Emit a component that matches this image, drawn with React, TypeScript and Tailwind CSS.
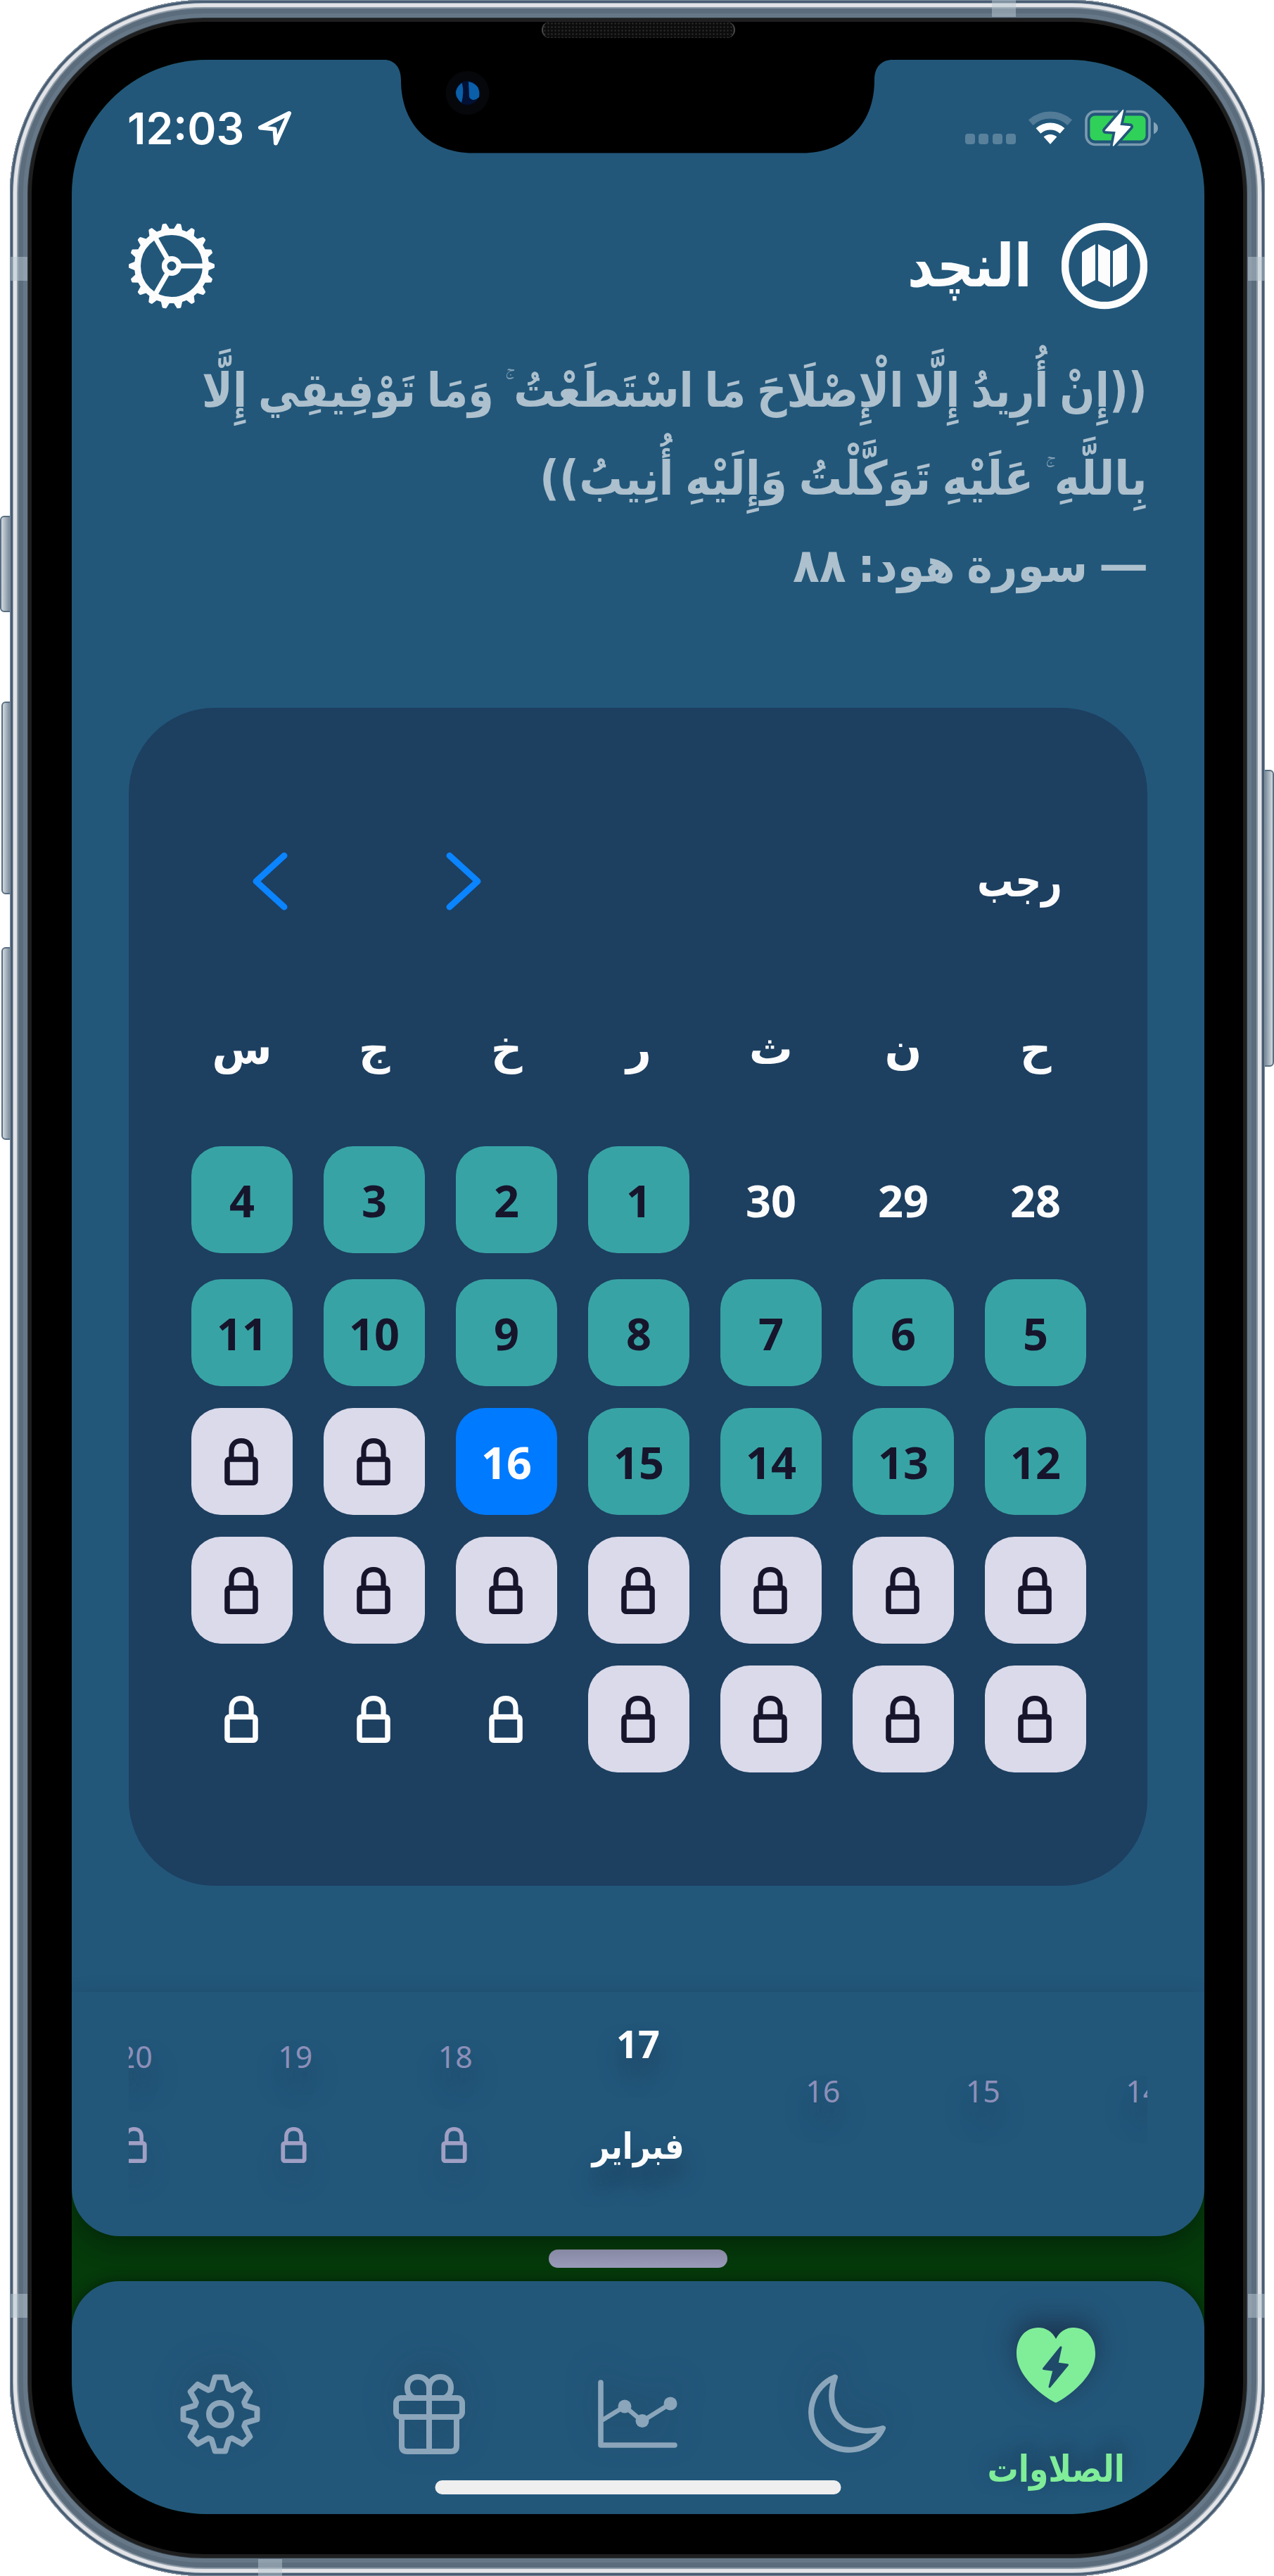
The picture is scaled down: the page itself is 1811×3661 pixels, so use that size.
import { useLayoutEffect, useRef, useState, type ReactNode } from "react";

/* Keeps a single line of text at an exact width by condensing or widening its glyphs. */
function FitText({
  width,
  className = "",
  origin = "right",
  children,
}: {
  width: number;
  className?: string;
  origin?: "right" | "center";
  children: ReactNode;
}) {
  const ref = useRef<HTMLSpanElement>(null);
  const [scale, setScale] = useState(1);
  useLayoutEffect(() => {
    if (ref.current) setScale(width / ref.current.offsetWidth);
  }, [width]);
  return (
    <span dir="rtl" className={"flex shrink-0 " + (origin === "center" ? "justify-center " : "justify-start ") + className} style={{ width }}>
      <span
        ref={ref}
        className="inline-block shrink-0 whitespace-nowrap"
        style={{ transform: `scaleX(${scale})`, transformOrigin: origin }}
      >
        {children}
      </span>
    </span>
  );
}

/* Small raised pause sign between two phrases of a verse. */
function PauseMark() {
  return <span className="relative -top-[14px] text-[44px] font-normal leading-none opacity-70">{"\u00a0\u00a0\u06da"}</span>;
}

const polar = (cx: number, cy: number, r: number, deg: number) => {
  const a = (deg * Math.PI) / 180;
  return `${(cx + r * Math.cos(a)).toFixed(2)} ${(cy + r * Math.sin(a)).toFixed(2)}`;
};

function CogWheel() {
  const teeth = Array.from({ length: 18 }, (_, i) => i * 20);
  return (
    <svg width="122" height="124" viewBox="0 0 122 124" fill="none" stroke="#fcfcfd">
      <circle cx="61" cy="62" r="48.5" strokeWidth="9" />
      {teeth.map((t) => (
        <path
          key={t}
          fill="#fcfcfd"
          strokeWidth="3"
          strokeLinejoin="round"
          d={`M${polar(61, 62, 50, t - 6.5)} L${polar(61, 62, 59.5, t - 1.6)} L${polar(61, 62, 59.5, t + 1.6)} L${polar(61, 62, 50, t + 6.5)} Z`}
        />
      ))}
      <circle cx="61" cy="62" r="10.3" strokeWidth="7.6" />
      {[0, 120, 240].map((t) => (
        <path key={t} strokeWidth="7" d={`M${polar(61, 62, 13, t)} L${polar(61, 62, 47, t)}`} />
      ))}
    </svg>
  );
}

function MapBadge() {
  return (
    <svg width="122" height="124" viewBox="0 0 122 124" fill="#fcfcfd">
      <circle cx="61" cy="62" r="56" fill="none" stroke="#fcfcfd" strokeWidth="10.5" />
      <path d="M29 44 Q29 42 31 41 L48 31 V82 L31 91 Q29 92 29 90 Z" />
      <path d="M52 31 L69 40 V92 L52 83 Z" />
      <path d="M73 41 L91 31 Q93 30 93 32 V79 Q93 81 91 82 L73 92 Z" />
    </svg>
  );
}

function LocationArrow() {
  return (
    <svg width="49" height="51" viewBox="0 0 49 51" fill="none" stroke="white" strokeWidth="6" strokeLinejoin="round">
      <path d="M45 4 L4 24.500 L24.5 26.5 L26 46.5 Z" />
    </svg>
  );
}

function Wifi() {
  const arc = (r: number) => `M${polar(31, 47, r, -132)} A${r} ${r} 0 0 1 ${polar(31, 47, r, -48)}`;
  return (
    <svg width="62" height="48" viewBox="0 0 62 48" fill="none" stroke="white">
      <path d={arc(41.5)} strokeWidth="10" opacity="0.22" />
      <path d={arc(25.5)} strokeWidth="10" />
      <path d={`M31 47 L${polar(31, 47, 14, -132)} A14 14 0 0 1 ${polar(31, 47, 14, -48)} Z`} fill="white" stroke="none" />
    </svg>
  );
}

function Battery() {
  return (
    <svg width="105" height="52" viewBox="0 0 105 52" className="overflow-visible">
      <rect x="2" y="2.5" width="90" height="47" rx="13" fill="none" stroke="white" strokeOpacity="0.4" strokeWidth="3.6" />
      <path d="M98 17.5 Q104 20 104 26 Q104 32 98 34.5 Z" fill="white" fillOpacity="0.45" />
      <rect x="7.5" y="8.5" width="79" height="35" rx="7" fill="#30d158" />
      <path
        d="M54.5 0.5 L29.5 29.5 L44.5 30.5 L40.5 51 L64.5 24 L49.5 22.5 Z"
        fill="white"
        stroke="#22577a"
        strokeWidth="9"
        strokeLinejoin="round"
        paintOrder="stroke"
      />
      <path d="M54.5 0.5 L29.5 29.5 L44.5 30.5 L40.5 51 L64.5 24 L49.5 22.5 Z" fill="white" stroke="white" strokeWidth="1.5" strokeLinejoin="round" />
    </svg>
  );
}

function Lock({ className = "" }: { className?: string }) {
  return (
    <svg viewBox="0 0 48 67" fill="none" stroke="currentColor" className={className}>
      <rect x="4" y="30" width="40" height="33.2" rx="3" strokeWidth="7.6" />
      <path d="M10 29 V18 C10 9 15 3.6 24 3.6 C33 3.6 38 9 38 18 V29" strokeWidth="7.2" />
    </svg>
  );
}

function Chevron({ dir }: { dir: "left" | "right" }) {
  return (
    <svg width="50" height="83" viewBox="0 0 50 83" fill="none" stroke="#0a84ff" strokeWidth="9" strokeLinecap="round" strokeLinejoin="round">
      <path d={dir === "left" ? "M45 5 L5 41.5 L45 78" : "M5 5 L45 41.5 L5 78"} />
    </svg>
  );
}

function SettingsIcon() {
  const pts: string[] = [];
  for (let i = 0; i < 8; i++) {
    const a = i * 45 - 90;
    pts.push(polar(56, 57, 38, a - 19), polar(56, 57, 42, a - 15), polar(56, 57, 53, a - 8), polar(56, 57, 53, a + 8), polar(56, 57, 42, a + 15), polar(56, 57, 38, a + 19));
  }
  return (
    <svg width="112" height="114" viewBox="0 0 112 114" fill="none" stroke="currentColor" strokeWidth="8" strokeLinejoin="round" className="overflow-visible">
      <path d={`M${pts.join(" L")} Z`} />
      <circle cx="56" cy="57" r="16" />
    </svg>
  );
}

function GiftIcon() {
  return (
    <svg width="102" height="114" viewBox="0 0 102 114" fill="none" stroke="currentColor" strokeWidth="8" strokeLinejoin="round">
      <rect x="4" y="34" width="94" height="27" rx="7" />
      <path d="M12 62 V102 Q12 110 20 110 H82 Q90 110 90 102 V62" />
      <path d="M51 19 V109" />
      <path d="M51 33 V20 C51 10 44 4 35 4 C26 4 20 10 20 19 C20 27 24 32 30 34" />
      <path d="M51 33 V20 C51 10 58 4 67 4 C76 4 82 10 82 19 C82 27 78 32 72 34" />
    </svg>
  );
}

function ChartIcon() {
  return (
    <svg width="114" height="98" viewBox="0 0 114 98" fill="none" stroke="currentColor" strokeWidth="7.6" strokeLinecap="round" strokeLinejoin="round">
      <path d="M4 4 V93 H109" />
      <path d="M7 57 L38 38 L63 59 L103 34" strokeWidth="6.5" />
      <circle cx="38" cy="38" r="9.5" fill="currentColor" stroke="none" />
      <circle cx="63" cy="58.5" r="9.5" fill="currentColor" stroke="none" />
      <circle cx="103" cy="34" r="9.5" fill="currentColor" stroke="none" />
    </svg>
  );
}

function MoonIcon() {
  return (
    <svg width="112" height="114" viewBox="0 0 112 114" fill="none" stroke="currentColor" strokeWidth="8" strokeLinecap="round" strokeLinejoin="round">
      <path d="M39 4.5 A53.5 53.5 0 1 0 107 77 C88 83 68 82 53 71 C37 59 28 36 39 4.5 Z" />
    </svg>
  );
}

function HeartIcon() {
  return (
    <svg width="112" height="107" viewBox="0 0 112 107">
      <path
        d="M56 106.500 C52 106.500 0 75 0 37 C0 14 13 0 31 0 C42 0 51 6 56 16 C61 6 70 0 81 0 C99 0 112 14 112 37 C112 75 60 106.500 56 106.500 Z"
        fill="#80ed99"
      />
      <path
        d="M63 28 L38.500 58.500 L53 60.500 L47 84 L72.500 53 L58 51 Z"
        fill="#1f4a69"
        stroke="#1f4a69"
        strokeWidth="3"
        strokeLinejoin="round"
      />
    </svg>
  );
}

const weekdays = ["ح", "ن", "ث", "ر", "خ", "ج", "س"];

type Cell = { label?: string; tone: "plain" | "done" | "today" | "locked" };
const c = (label: string, tone: Cell["tone"]): Cell => ({ label, tone });
const lock: Cell = { tone: "locked" };
const bare: Cell = { tone: "plain" };

const weeks: Cell[][] = [
  [c("28", "plain"), c("29", "plain"), c("30", "plain"), c("1", "done"), c("2", "done"), c("3", "done"), c("4", "done")],
  ["5", "6", "7", "8", "9", "10", "11"].map((d) => c(d, "done")),
  [c("12", "done"), c("13", "done"), c("14", "done"), c("15", "done"), c("16", "today"), lock, lock],
  [lock, lock, lock, lock, lock, lock, lock],
  [lock, lock, lock, lock, bare, bare, bare],
];

const tones = {
  plain: "text-[#fcfcfd]",
  done: "bg-[#38a3a5] text-[#16152c]",
  today: "bg-[#007aff] text-[#fcfcfd]",
  locked: "bg-[#dadaea] text-[#16152c]",
};

function StatusBar() {
  return (
    <div className="flex h-[194px] items-center pl-[79px] pr-[65px]">
      <span className="font-['Inter'] text-[62.500px] font-semibold leading-none text-white">12:03</span>
      <span className="ml-[19px]">
        <LocationArrow />
      </span>
      <div className="ml-auto flex items-center">
        <div className="mt-[30px] flex gap-[5.500px]">
          {[0, 1, 2, 3].map((i) => (
            <span key={i} className="h-[15px] w-[14px] rounded-[4px] bg-white/25" />
          ))}
        </div>
        <span className="ml-[18px]">
          <Wifi />
        </span>
        <span className="ml-[18px]">
          <Battery />
        </span>
      </div>
    </div>
  );
}

function Calendar() {
  return (
    <section className="mx-[81px] mt-[137px] h-[1674px] rounded-[122px] bg-[#1d3f60] px-[87px] pt-[185px] font-bold text-[#fcfcfd]">
      <div dir="rtl" className="flex h-[122px] items-center justify-between pl-[89px] pr-[34px]">
        <FitText width={121} className="text-[64px] leading-[100px]">
          رجب
        </FitText>
        <div dir="ltr" className="flex gap-[225px]">
          <Chevron dir="left" />
          <Chevron dir="right" />
        </div>
      </div>
      <div dir="rtl" className="mt-[128px] grid grid-cols-[repeat(7,144px)] gap-x-[44px] text-center text-[62px] leading-[100px]">
        {weekdays.map((d) => (
          <span key={d}>{d}</span>
        ))}
      </div>
      <div dir="rtl" className="mt-[88px] flex flex-col gap-[31px]">
        {weeks.map((w, r) => (
          <div key={r} className={"grid grid-cols-[repeat(7,144px)] gap-x-[44px] " + (r === 0 ? "mb-[6px]" : "")}>
            {w.map((cell, i) => (
              <div
                key={i}
                className={
                  "flex h-[152px] items-center justify-center rounded-[42px] font-['Noto_Sans'] text-[63px] font-bold leading-none " + tones[cell.tone]
                }
              >
                {cell.label ?? <Lock className="mr-[2px] h-[67px] w-[48px]" />}
              </div>
            ))}
          </div>
        ))}
      </div>
    </section>
  );
}

function StripDay({ day, locked, offset }: { day: string; locked?: boolean; offset: string }) {
  return (
    <div className={"flex w-[227.500px] shrink-0 flex-col items-center text-[#8d8fb8] " + offset}>
      <span className="font-['Noto_Sans'] text-[43px] leading-[60px] [text-shadow:0_26px_34px_rgba(30,50,75,0.6)]">{day}</span>
      {locked && <Lock className="mr-[4px] mt-[70px] h-[51px] w-[37px] text-[#a09fc4] drop-shadow-[0_24px_16px_rgba(30,55,82,0.35)]" />}
    </div>
  );
}

function DayStrip() {
  return (
    <div className="relative h-[347px] rounded-b-[68px] bg-[#22577a] px-[81px] shadow-[0_14px_36px_rgba(0,0,0,0.3)]">
      <div className="flex h-full justify-center overflow-hidden">
        <StripDay day="20" locked offset="pt-[62px]" />
        <StripDay day="19" locked offset="pt-[62px]" />
        <StripDay day="18" locked offset="pt-[62px]" />
        <div className="flex w-[292px] shrink-0 flex-col items-center pt-[43px] font-bold text-[#fcfcfd]">
          <span className="font-['Noto_Sans'] text-[54px] leading-[60px] [text-shadow:0_24px_32px_rgba(30,50,75,0.7)]">17</span>
          <FitText width={131} origin="center" className="mt-[87px] text-[51px] leading-[60px] [text-shadow:0_24px_32px_rgba(30,50,75,0.7)]">
            فبراير
          </FitText>
        </div>
        <div className="ml-[3px] flex shrink-0">
          <StripDay day="16" offset="pt-[111px]" />
          <StripDay day="15" offset="pt-[111px]" />
          <StripDay day="14" offset="-mr-[3px] pt-[111px]" />
        </div>
      </div>
    </div>
  );
}

function TabBar() {
  const shadow = "drop-shadow-[0_-18px_22px_rgba(30,50,75,0.4)]";
  return (
    <nav className="relative flex h-[331px] justify-center rounded-t-[68px] bg-[#22577a] text-[#8ba5ba] shadow-[0_0_20px_rgba(0,0,0,0.4)]">
      {[<SettingsIcon />, <GiftIcon />, <ChartIcon />, <MoonIcon />].map((icon, i) => (
        <div key={i} className="mt-[132px] flex h-[114px] w-[297px] items-center justify-center">
          <span className={shadow}>{icon}</span>
        </div>
      ))}
      <div className="flex w-[297px] flex-col items-center pt-[66px] font-bold text-[#80ed99]">
        <span className="drop-shadow-[0_-12px_20px_rgba(25,35,60,0.7)]">
          <HeartIcon />
        </span>
        <FitText width={195} origin="center" className="mt-[64px] text-[52px] leading-[60px] [text-shadow:0_-12px_30px_rgba(30,50,75,0.7)]">
          الصلاوات
        </FitText>
      </div>
      <div className="absolute bottom-[28px] left-1/2 h-[20px] w-[577px] -translate-x-1/2 rounded-full bg-[#efefef]" />
    </nav>
  );
}

function Bands() {
  return (
    <>
      <div className="absolute left-[15px] top-[365px] h-[34px] w-[24px] bg-[#b9c8d2]/50" />
      <div className="absolute left-[15px] top-[3260px] h-[34px] w-[24px] bg-[#b9c8d2]/50" />
      <div className="absolute left-[1774px] top-[365px] h-[34px] w-[24px] bg-[#b9c8d2]/50" />
      <div className="absolute left-[1774px] top-[3260px] h-[34px] w-[24px] bg-[#b9c8d2]/50" />
      <div className="absolute left-[1410px] top-0 h-[24px] w-[34px] bg-[#b9c8d2]/50" />
      <div className="absolute left-[367px] top-[3637px] h-[24px] w-[34px] bg-[#b9c8d2]/50" />
    </>
  );
}

function SideButtons() {
  return (
    <>
      <div className="absolute left-0 top-[733px] h-[137px] w-[18px] rounded-l-[6px] border-[2px] border-[#586e82] bg-linear-to-r from-[#d3dae0] to-[#6a7c8c]" />
      <div className="absolute left-[2px] top-[997px] h-[274px] w-[16px] rounded-l-[6px] border-[2px] border-[#586e82] bg-linear-to-r from-[#d3dae0] to-[#6a7c8c]" />
      <div className="absolute left-[2px] top-[1346px] h-[274px] w-[16px] rounded-l-[6px] border-[2px] border-[#586e82] bg-linear-to-r from-[#d3dae0] to-[#6a7c8c]" />
      <div className="absolute left-[1794px] top-[1094px] h-[422px] w-[17px] rounded-r-[6px] border-[2px] border-[#586e82] bg-linear-to-l from-[#d3dae0] to-[#6a7c8c]" />
    </>
  );
}

function Notch() {
  return (
    <>
      <svg width="723" height="134" viewBox="546 84 723 134" className="absolute left-[546px] top-[84px]">
        <path
          d="M546 84 V85 C560 85 570 95 570 114 C570 180 615 217.500 672 217.500 H1141 C1198 217.500 1243 180 1243 114 C1243 95 1253 85 1269 85 V84 Z"
          fill="black"
        />
        <circle cx="664.500" cy="132" r="31" fill="#06070b" />
        <circle cx="664.500" cy="132" r="17" fill="#021033" />
        <path d="M656 118 Q640 132 656 146 Q660 132 657 119 Z" fill="#0a5fa8" />
        <path d="M666 116 Q684 120 681 138 Q672 146 667 138 Z" fill="#0a5fa8" />
      </svg>
      <div className="absolute left-[770px] top-[31px] h-[23px] w-[275px] rounded-full border-x-2 border-[#4a4a4a] bg-[#0c0c0c] bg-[radial-gradient(#262626_1px,transparent_1.500px)] bg-[size:5px_5px]" />
    </>
  );
}

export default function App() {
  return (
    <main className="relative h-[3661px] w-[1811px] overflow-hidden bg-white font-['DejaVu_Sans',sans-serif]">
      <SideButtons />
      <div className="relative ml-[14px] h-[3661px] w-[1784px] rounded-[276px] bg-black px-[88px] pt-[85px] shadow-[inset_0_0_0_1px_#7f90a0,inset_0_0_0_4px_#485c72,inset_0_0_0_5px_#9aa7b2,inset_0_0_0_10px_#e3e4e8,inset_0_0_0_12px_#8d9aa6,inset_0_0_0_19px_#5b6c7c,inset_0_0_0_25px_#667888,inset_0_0_0_26px_#2e3840,inset_0_0_0_31px_#1f1f1f]">
        <div className="relative flex h-[3488px] w-[1610px] flex-col overflow-hidden rounded-[192px] bg-[#053a0b]">
          <div className="h-[2746px] bg-[#22577a]">
            <StatusBar />
            <header dir="rtl" className="flex h-[198px] items-center px-[81px]">
              <MapBadge />
              <FitText width={177} className="mr-[42px] text-[84px] font-bold leading-[120px] text-[#fcfcfd]">
                النچد
              </FitText>
              <span className="mr-auto">
                <CogWheel />
              </span>
            </header>
            <div
              dir="rtl"
              className="mt-[16px] grid h-[376px] auto-rows-[124.500px] px-[81px] text-[67px] font-bold leading-[124.500px] text-[#adc0cd] [word-spacing:-0.08em]"
            >
              <FitText width={1344}>
                <span className="tracking-[-0.1em]">((</span>إِنْ أُرِيدُ إِلَّا الْإِصْلَاحَ مَا اسْتَطَعْتُ
                <PauseMark /> وَمَا تَوْفِيقِي إِلَّا
              </FitText>
              <FitText width={864}>
                بِاللَّهِ
                <PauseMark /> عَلَيْهِ تَوَكَّلْتُ وَإِلَيْهِ أُنِيبُ<span className="tracking-[-0.1em]">))</span>
              </FitText>
              <FitText width={504}>
                <span className="font-['Noto_Sans'] text-[74px] leading-none">—</span> سورة هود: ٨٨
              </FitText>
            </div>
            <Calendar />
          </div>
          <DayStrip />
          <div className="flex h-[64px] items-center justify-center">
            <div className="relative h-[26px] w-[254px] rounded-full bg-linear-to-b from-[#8788a3] to-[#999bba]" />
          </div>
          <TabBar />
        </div>
      </div>
      <Bands />
      <Notch />
    </main>
  );
}
